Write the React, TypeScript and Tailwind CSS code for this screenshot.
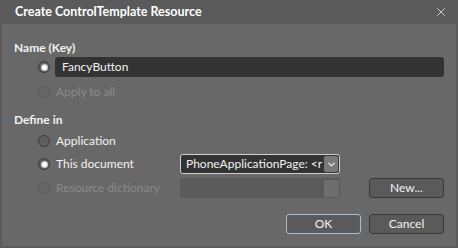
import { ChevronDown, X } from "lucide-react";

function Radio({ checked, disabled }: { checked?: boolean; disabled?: boolean }) {
  return (
    <span
      className={
        "flex h-[12px] w-[12px] shrink-0 items-center justify-center rounded-full border " +
        (disabled ? "border-[#5e5e5e] bg-[#666]" : "border-[#3a3a3a] bg-[#5e5e5e]")
      }
    >
      {checked && <span className="h-[5px] w-[5px] rounded-full bg-white shadow-[0_0_1px_1px_#cfcfcf]" />}
    </span>
  );
}

function Option({ label, checked, disabled }: { label: string; checked?: boolean; disabled?: boolean }) {
  return (
    <div className="flex items-center gap-[6px]">
      <Radio checked={checked} disabled={disabled} />
      <span className={disabled ? "text-[#8a8a8a]" : "text-[#f2f2f2]"}>{label}</span>
    </div>
  );
}

function Button({ label, focused }: { label: string; focused?: boolean }) {
  return (
    <button
      className={
        "flex h-[20px] w-[75px] items-center justify-center rounded-[3px] border bg-[#5a5a5a] text-[#f2f2f2] " +
        (focused ? "border-[#a9bccd]" : "border-[#3a3a3a]")
      }
    >
      {label}
    </button>
  );
}

export default function App() {
  return (
    <div
      className="flex h-[248px] w-[458px] flex-col bg-[#5a5a5a] text-[12px]"
      style={{ fontFamily: 'Lato, "Open Sans", sans-serif' }}
    >
      {/* Title bar */}
      <div className="flex h-[24px] shrink-0 items-center justify-between pl-[15px] pr-[10px]">
        <span className="text-[12.5px] font-bold text-white">Create ControlTemplate Resource</span>
        <X size={14} strokeWidth={1.5} className="text-[#dcdcdc]" />
      </div>

      <div className="mx-[2px] mb-[2px] flex flex-1 flex-col bg-[#686868] pl-[12px] pr-[12px]">
        <div className="mt-[16px] h-[16px] font-bold leading-[16px] text-[#f2f2f2]">Name (Key)</div>

        <div className="mt-[1px] flex h-[20px] items-center gap-[5px] pl-[24px]">
          <Radio checked />
          <div className="flex h-[20px] flex-1 items-center rounded-[3px] bg-[#333] pl-[7px] text-[#f2f2f2]">
            FancyButton
          </div>
        </div>

        <div className="mt-[5px] flex h-[20px] items-center pl-[24px]">
          <Option label="Apply to all" disabled />
        </div>

        <div className="mt-[10px] h-[16px] font-bold leading-[16px] text-[#f2f2f2]">Define in</div>

        <div className="mt-[3px] flex h-[20px] items-center pl-[24px]">
          <Option label="Application" />
        </div>

        <div className="mt-[3px] flex h-[20px] items-center pl-[24px]">
          <div className="w-[142px]">
            <Option label="This document" checked />
          </div>
          <div className="flex h-[20px] w-[160px] items-center rounded-[3px] border border-[#d0d0d0] bg-[#333] pl-[5px] pr-[1px]">
            <span className="flex-1 overflow-hidden whitespace-nowrap text-[#f2f2f2]">PhoneApplicationPage: &lt;r</span>
            <span className="flex h-[16px] w-[14px] items-center justify-center rounded-[2px] bg-[#7a7a7a]">
              <ChevronDown size={11} strokeWidth={2.5} className="text-[#eee]" />
            </span>
          </div>
        </div>

        <div className="mt-[4px] flex h-[20px] items-center pl-[24px]">
          <div className="w-[142px]">
            <Option label="Resource dictionary" disabled />
          </div>
          <div className="flex h-[20px] w-[160px] items-center justify-end rounded-[3px] bg-[#5a5a5a] pr-[1px]">
            <span className="h-[17px] w-[15px] rounded-[2px] bg-[#6e6e6e]" />
          </div>
          <div className="ml-auto">
            <Button label="New..." />
          </div>
        </div>

        <div className="mt-[16px] flex justify-end gap-[8px]">
          <Button label="OK" focused />
          <Button label="Cancel" />
        </div>
      </div>
    </div>
  );
}
